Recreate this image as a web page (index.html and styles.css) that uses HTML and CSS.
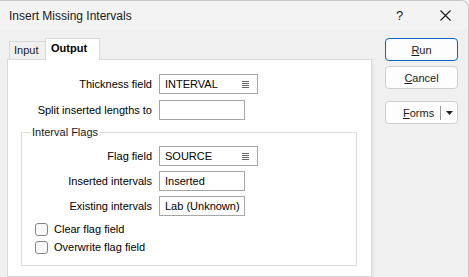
FILE: index.html
```html
<!DOCTYPE html>
<html>
<head>
<meta charset="utf-8">
<link rel="stylesheet" href="styles.css">
</head>
<body>
<div class="window">
  <div class="titlebar">
    <span class="title">Insert Missing Intervals</span>
    <span class="cap-btn help">?</span>
    <span class="cap-btn close">
      <svg width="11" height="11" viewBox="0 0 11 11"><path d="M0.5 0.5 L10.5 10.5 M10.5 0.5 L0.5 10.5" stroke="#1a1a1a" stroke-width="1.1" fill="none"/></svg>
    </span>
  </div>
  <div class="body">
    <div class="tabs-area">
      <div class="tabstrip">
        <div class="tab">Input</div>
        <div class="tab active">Output</div>
      </div>
      <div class="panel">
        <div class="row">
          <span class="lbl">Thickness field</span>
          <div class="field wide"><span>INTERVAL</span><svg class="menu" width="7" height="7" viewBox="0 0 7 7"><path d="M0 0.5H7M0 2.5H7M0 4.5H7M0 6.5H7" stroke="#666" stroke-width="1"/></svg></div>
        </div>
        <div class="row">
          <span class="lbl">Split inserted lengths to</span>
          <div class="field narrow"></div>
        </div>
        <fieldset class="group">
          <legend>Interval Flags</legend>
          <div class="grow">
            <span class="lbl">Flag field</span>
            <div class="field wide"><span>SOURCE</span><svg class="menu" width="7" height="7" viewBox="0 0 7 7"><path d="M0 0.5H7M0 2.5H7M0 4.5H7M0 6.5H7" stroke="#666" stroke-width="1"/></svg></div>
          </div>
          <div class="grow">
            <span class="lbl">Inserted intervals</span>
            <div class="field narrow"><span>Inserted</span></div>
          </div>
          <div class="grow">
            <span class="lbl">Existing intervals</span>
            <div class="field narrow"><span>Lab (Unknown)</span></div>
          </div>
          <div class="checks">
            <div class="check"><span class="box"></span><span>Clear flag field</span></div>
            <div class="check"><span class="box"></span><span>Overwrite flag field</span></div>
          </div>
        </fieldset>
      </div>
    </div>
    <div class="buttons">
      <div class="btn default"><span><u>R</u>un</span></div>
      <div class="btn"><span><u>C</u>ancel</span></div>
      <div class="btn split"><span class="btn-text"><u>F</u>orms</span><span class="divider"></span><svg class="caret" width="7" height="4" viewBox="0 0 7 4"><path d="M0 0H7L3.5 4Z" fill="#222"/></svg></div>
    </div>
  </div>
</div>
</body>
</html>
```
FILE: styles.css
```css
html, body {
  margin: 0;
  padding: 0;
  background: #f0f0f0;
}
.window {
  width: 469px;
  height: 277px;
  box-sizing: border-box;
  border-top: 1px solid #c6c6c6;
  border-right: 1px solid #c6c6c6;
  border-top-right-radius: 8px;
  overflow: hidden;
  background: #f0f0f0;
  font-family: "Liberation Sans", Arial, sans-serif;
  font-size: 11px;
  color: #000;
  display: flex;
  flex-direction: column;
}
.titlebar {
  height: 29px;
  flex: none;
  display: flex;
  align-items: center;
  background: #f3f3f3;
  padding-left: 9px;
}
.title {
  flex: 1;
  font-size: 12px;
  color: #1a1a1a;
}
.cap-btn {
  width: 45px;
  height: 29px;
  display: flex;
  align-items: center;
  justify-content: center;
}
.help {
  font-size: 13px;
  color: #1a1a1a;
  margin-right: 1px;
}
.body {
  flex: 1;
  display: flex;
  min-height: 0;
}
.tabs-area {
  margin-left: 7px;
  padding-top: 8px;
  width: 365px;
  display: flex;
  flex-direction: column;
}
.tabstrip {
  height: 21px;
  display: flex;
  align-items: flex-end;
  padding-left: 2px;
}
.tab {
  box-sizing: border-box;
  height: 18px;
  width: 36px;
  border: 1px solid #d9d9d9;
  border-bottom: none;
  border-right: none;
  background: #f0f0f0;
  padding-left: 4px;
  line-height: 17px;
  color: #1a1a1a;
}
.tab.active {
  height: 22px;
  width: 55px;
  margin-bottom: -1px;
  border-right: 1px solid #d9d9d9;
  background: #fff;
  font-weight: bold;
  padding-left: 5px;
  line-height: 19px;
  position: relative;
  z-index: 1;
  color: #000;
}
.panel {
  flex: 1;
  background: #fff;
  border: 1px solid #d9d9d9;
  box-shadow: 2px 0 0 #e8e8e8;
  padding-top: 14px;
}
.row, .grow {
  display: grid;
  grid-template-columns: 144px auto;
  column-gap: 7px;
  align-items: center;
  height: 20px;
}
.row + .row {
  margin-top: 6px;
}
.grow {
  grid-template-columns: 130px auto;
}
.grow + .grow {
  margin-top: 5px;
}
.lbl {
  text-align: right;
  white-space: nowrap;
}
.field {
  box-sizing: border-box;
  height: 20px;
  border: 1px solid #a6a6a6;
  background: #fff;
  display: flex;
  align-items: center;
  padding-left: 5px;
  padding-right: 2px;
  white-space: nowrap;
  overflow: hidden;
}
.field span {
  flex: 1;
}
.field.wide {
  width: 99px;
  padding-right: 8px;
}
.field.narrow {
  width: 86px;
}
.group {
  box-sizing: border-box;
  width: 336px;
  margin: 5px 0 0 13px;
  padding: 7px 0 9px 0;
  border: 1px solid #dcdcdc;
  min-width: 0;
}
.group legend {
  margin-left: 8px;
  padding: 0 2px;
  line-height: 14px;
  color: #1a1a1a;
}
.checks {
  margin-top: 4px;
  padding-left: 13px;
}
.check {
  height: 18px;
  display: flex;
  align-items: center;
  gap: 6px;
}
.box {
  box-sizing: border-box;
  width: 13px;
  height: 13px;
  border: 1px solid #868686;
  border-radius: 3px;
  background: #f8f8f8;
}
.buttons {
  margin-left: 13px;
  padding-top: 8px;
  width: 73px;
  display: flex;
  flex-direction: column;
}
.btn {
  box-sizing: border-box;
  height: 23px;
  border: 1px solid #cfcfcf;
  border-radius: 4px;
  background: #fdfdfd;
  display: flex;
  align-items: center;
  justify-content: center;
  color: #1a1a1a;
}
.btn + .btn {
  margin-top: 5px;
}
.btn.default {
  border-color: #0a64c0;
}
.btn.split {
  margin-top: 12px;
  justify-content: flex-start;
  padding-left: 17px;
}
.btn-text {
  width: 37px;
}
.divider {
  width: 1px;
  height: 14px;
  background: #9a9a9a;
}
.caret {
  margin-left: 5px;
}
```
